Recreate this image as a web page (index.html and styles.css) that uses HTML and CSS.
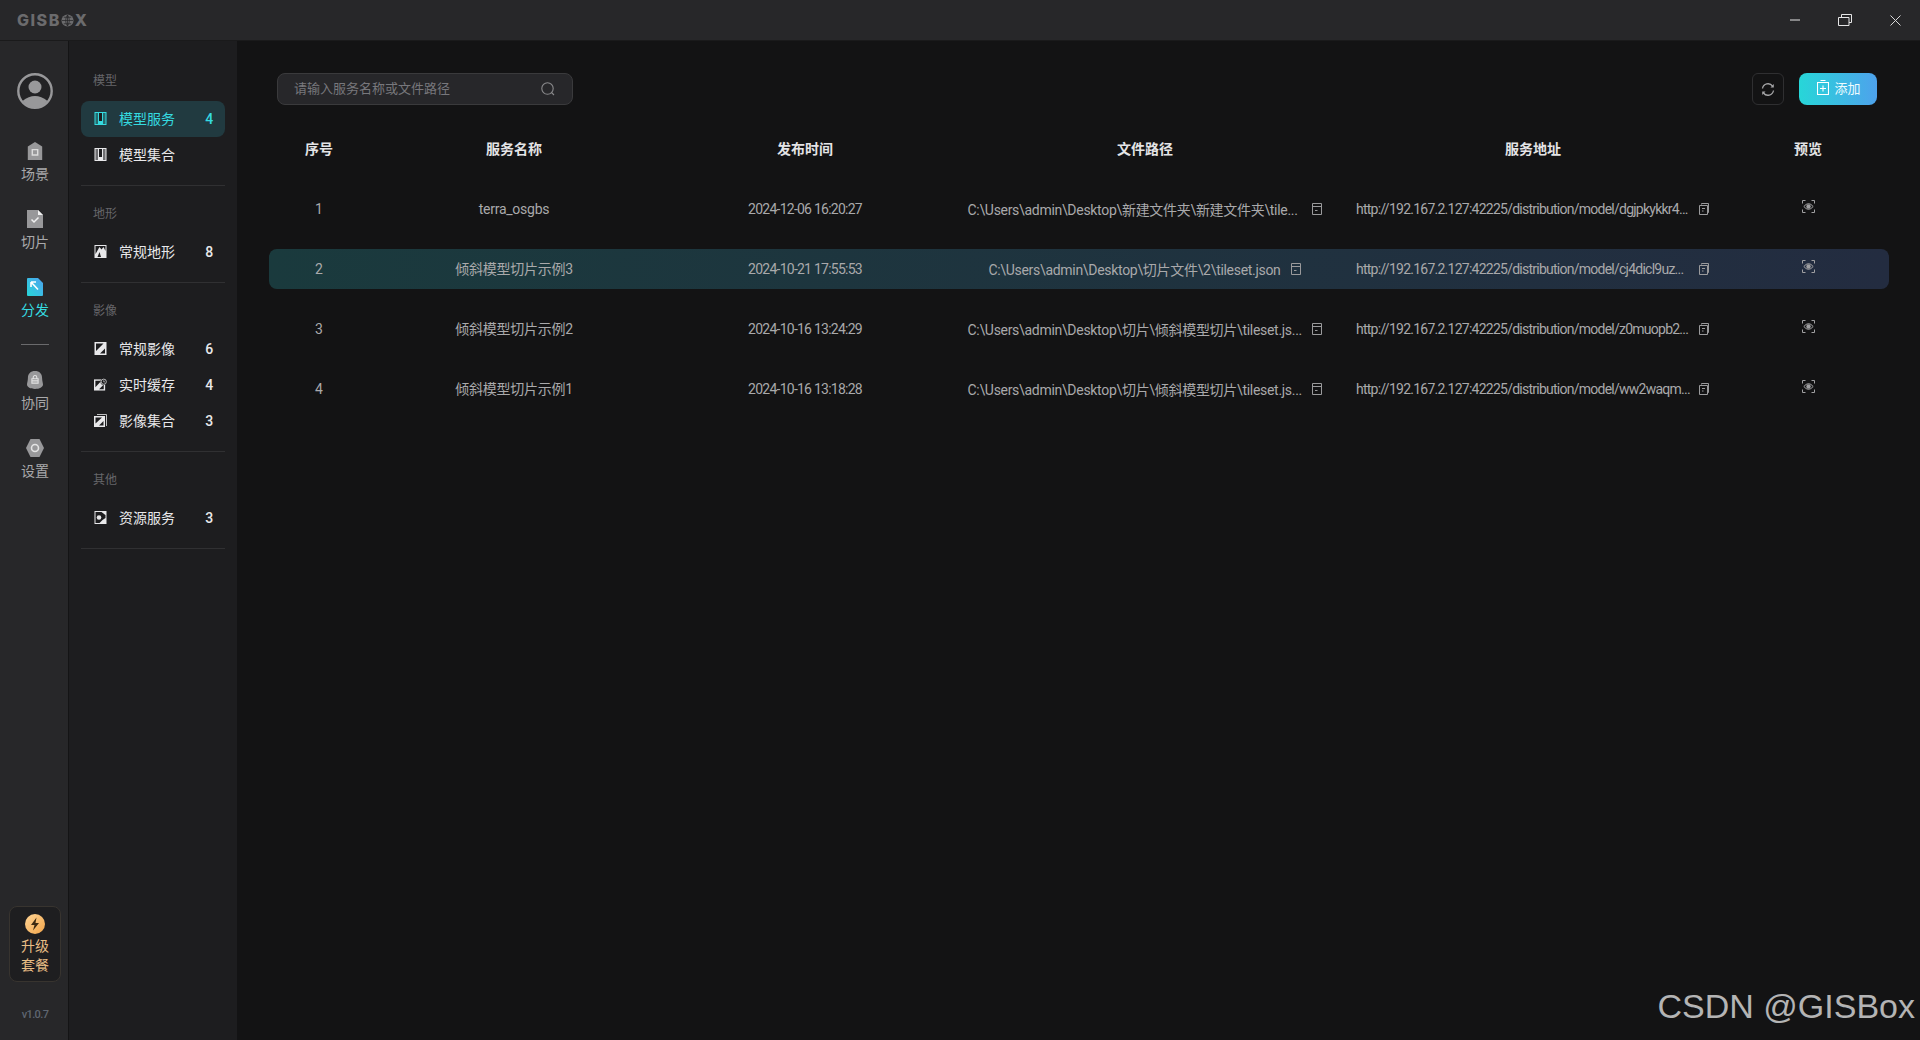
FILE: index.html
```html
<!DOCTYPE html>
<html lang="zh-CN">
<head>
<meta charset="utf-8">
<title>GISBox</title>
<link rel="stylesheet" href="styles.css">
</head>
<body>
<svg class="defs" width="0" height="0" aria-hidden="true">
  <symbol id="doc" viewBox="0 0 12 12"><path d="M1.500 .5h9v11h-9zM1.500 3.500h9M4 7.500h2.500" fill="none" stroke="currentColor"/></symbol>
  <symbol id="copy" viewBox="0 0 12 12"><path d="M3.500 1.500V.5h7v9h-1M1.500 2.500h8v9h-8zM4 5.500h3M4 8h1.500" fill="none" stroke="currentColor"/></symbol>
  <symbol id="view" viewBox="0 0 13 13"><path d="M.5 3.500V.5h3M9.500 .5h3v3M12.500 9.500v3h-3M3.500 12.500h-3v-3M1.800 6.500Q6.500 .8 11.200 6.500Q6.500 12.200 1.800 6.500Z" fill="none" stroke="currentColor"/><circle cx="6.500" cy="6.500" r="2.200" fill="currentColor"/></symbol>
  <symbol id="m-model" viewBox="0 0 12 13"><path d="M0 0h12v13H0z" fill="currentColor"/><path d="M1 1h2.500v11H1zM8.500 1H11v11H8.500z" fill="#1d1d1f" opacity=".6"/><path d="M4.500 1h3v8h-3z" fill="#1d1d1f"/></symbol>
  <symbol id="m-terrain" viewBox="0 0 12 13"><path d="M0 0h12v13H0z" fill="currentColor"/><path d="M1 12V1h10v5L9 2 7 4.500 5 2 1 9z" fill="#1d1d1f"/><path d="M3 12l2-5 1.500 5z" fill="#1d1d1f"/></symbol>
  <symbol id="m-image" viewBox="0 0 12 13"><path d="M0 0h12v13H0z" fill="currentColor"/><path d="M1.500 1.500H9L1.500 9zM10.500 11.500h-5l5-5z" fill="#1d1d1f"/></symbol>
  <symbol id="m-cache" viewBox="0 0 14 13"><path d="M0 1h12v12H0z" fill="currentColor"/><path d="M1.500 2.500H8L1.500 9.500zM10.500 11.500h-5l5-5z" fill="#1d1d1f"/><circle cx="10.500" cy="3.500" r="3.500" fill="#1d1d1f"/><circle cx="10.500" cy="3.500" r="2.800" fill="none" stroke="currentColor" stroke-width=".8"/><path d="M10.500 2v1.700h1.300" fill="none" stroke="currentColor" stroke-width=".7"/></symbol>
  <symbol id="m-stack" viewBox="0 0 13 13"><path d="M3 .5h9.500V12" fill="none" stroke="currentColor" stroke-width=".8"/><path d="M0 2h11v11H0z" fill="currentColor"/><path d="M1.500 3.500H8L1.500 9.500zM9.500 11.500H5l4.500-4.500z" fill="#1d1d1f"/></symbol>
  <symbol id="m-res" viewBox="0 0 12 13"><path d="M0 0h12v13H0z" fill="currentColor"/><path d="M1 1h7l3 3v3L8 9 5 12H1z" fill="#1d1d1f"/><circle cx="4.500" cy="6.500" r="2.300" fill="currentColor"/><path d="M7 1h4v3z" fill="currentColor"/></symbol>
</svg>

<div class="app">
  <header class="titlebar">
    <div class="logo">GISB<svg class="globe" viewBox="0 0 14 14"><circle cx="7" cy="7" r="6.500" fill="#6b6b6d"/><path d="M1 7h12M7 1v12M3 3.500h8M3 10.500h8M7 1Q3 7 7 13Q11 7 7 1" fill="none" stroke="#262628" stroke-width=".8"/></svg>X</div>
    <div class="winctl">
      <svg class="w-min" viewBox="0 0 10 2"><path d="M0 1h10" stroke="#e6e6e6"/></svg>
      <svg class="w-max" viewBox="0 0 14 12"><path d="M3.500 3V.5h10v8H11M.5 3.500h10.500v8H.5z" fill="none" stroke="#e6e6e6"/></svg>
      <svg class="w-close" viewBox="0 0 11 11"><path d="M.5.500l10 10M10.500.5l-10 10" stroke="#d8d8d8"/></svg>
    </div>
  </header>

  <div class="body">
    <nav class="rail">
      <svg class="avatar" viewBox="0 0 36 36"><circle cx="18" cy="18" r="16.700" fill="#232325" stroke="#98989a" stroke-width="2.400"/><circle cx="18" cy="14" r="6.500" fill="#98989a"/><path d="M5.500 28Q18 18 30.500 28Q25 34.800 18 34.800T5.500 28Z" fill="#98989a"/></svg>
      <a class="rail-item"><svg class="rail-ic" viewBox="0 0 16 20"><path d="M8 0l8 5v15H0V5z" fill="#98989a"/><path d="M5 8.500h6v6H5z" fill="none" stroke="#dcdcdc" stroke-width="1.600"/></svg><span>场景</span></a>
      <a class="rail-item"><svg class="rail-ic" viewBox="0 0 16 18"><path d="M0 0h11l5 5v13H0z" fill="#98989a"/><path d="M11 0l5 5h-5z" fill="#f0f0f0"/><path d="M4.500 9.500l2.500 2.500 4.500-4.500" fill="none" stroke="#f0f0f0" stroke-width="1.500"/></svg><span>切片</span></a>
      <a class="rail-item rail-on"><svg class="rail-ic" viewBox="0 0 16 18"><defs><linearGradient id="grad-send" x1="0" y1="1" x2="1" y2="0"><stop offset="0" stop-color="#27d6d8"/><stop offset="1" stop-color="#4da2ee"/></linearGradient></defs><path d="M1 0h10l5 5v12a1 1 0 0 1-1 1H1a1 1 0 0 1-1-1V1a1 1 0 0 1 1-1z" fill="url(#grad-send)"/><path d="M4 4h5M4 4v5M4 4l7 7.500" fill="none" stroke="#fff" stroke-width="1.600"/></svg><span>分发</span></a>
      <div class="rail-sep"></div>
      <a class="rail-item"><svg class="rail-ic" viewBox="0 0 18 20"><path d="M9 0C14 0 17 3 17 8c0 3 1 5 1 7 0 3-4 5-9 5s-9-2-9-5c0-2 1-4 1-7C1 3 4 0 9 0z" fill="#98989a"/><path d="M5.500 8.500h7v5h-7zM7 8.500V7a2 2 0 0 1 4 0v1.500M5.500 11h7" fill="none" stroke="#e4e4e4" stroke-width="1.200"/></svg><span>协同</span></a>
      <a class="rail-item"><svg class="rail-ic rail-hex" viewBox="0 0 18 18"><path d="M4.500 0h9L18 9l-4.500 9h-9L0 9z" fill="#98989a"/><circle cx="9" cy="9" r="3.500" fill="none" stroke="#e4e4e4" stroke-width="1.600"/></svg><span>设置</span></a>
      <div class="rail-fill"></div>
      <a class="upgrade">
        <svg class="bolt" viewBox="0 0 20 20"><defs><linearGradient id="grad-bolt" x1="0" y1="0" x2="1" y2="1"><stop offset="0" stop-color="#ffd596"/><stop offset="1" stop-color="#f2a54a"/></linearGradient></defs><circle cx="10" cy="10" r="10" fill="url(#grad-bolt)"/><path d="M11.500 3.500L6 11h3.500L8 16.500 14 9h-3.500z" fill="#3d2a12"/></svg>
        <span>升级<br>套餐</span>
      </a>
      <div class="version">v1.0.7</div>
    </nav>

    <aside class="panel">
      <section class="group">
        <h4>模型</h4>
        <a class="item item-on"><svg class="m-ic"><use href="#m-model"/></svg><span class="name">模型服务</span><b>4</b></a>
        <a class="item"><svg class="m-ic"><use href="#m-model"/></svg><span class="name">模型集合</span></a>
      </section>
      <section class="group">
        <h4>地形</h4>
        <a class="item"><svg class="m-ic"><use href="#m-terrain"/></svg><span class="name">常规地形</span><b>8</b></a>
      </section>
      <section class="group">
        <h4>影像</h4>
        <a class="item"><svg class="m-ic"><use href="#m-image"/></svg><span class="name">常规影像</span><b>6</b></a>
        <a class="item"><svg class="m-ic"><use href="#m-cache"/></svg><span class="name">实时缓存</span><b>4</b></a>
        <a class="item"><svg class="m-ic"><use href="#m-stack"/></svg><span class="name">影像集合</span><b>3</b></a>
      </section>
      <section class="group">
        <h4>其他</h4>
        <a class="item"><svg class="m-ic"><use href="#m-res"/></svg><span class="name">资源服务</span><b>3</b></a>
      </section>
    </aside>

    <main class="main">
      <div class="toolbar">
        <div class="search">
          <span>请输入服务名称或文件路径</span>
          <svg viewBox="0 0 14 14"><circle cx="6.500" cy="6.500" r="5.700" fill="none" stroke="#8a8a8c" stroke-width="1.100"/><path d="M10.500 10.500l2.500 2.500" stroke="#8a8a8c" stroke-width="1.100"/></svg>
        </div>
        <div class="actions">
          <button class="refresh"><svg viewBox="0 0 14 14"><path d="M1.500 6A5.600 5.600 0 0 1 11.500 3.500M12.500 8A5.600 5.600 0 0 1 2.500 10.500" fill="none" stroke="#a6a6a8" stroke-width="1.300"/><path d="M12.800 1.500V5H9.500zM1.200 12.500V9h3.300z" fill="#a6a6a8"/></svg></button>
          <button class="add"><svg viewBox="0 0 12 15"><path d="M3.500.5h5M.5 2.500h11v12H.5zM6 5.500v6M3 8.500h6" fill="none" stroke="#fff" stroke-width="1.100"/></svg>添加</button>
        </div>
      </div>

      <div class="grid thead">
        <div>序号</div><div>服务名称</div><div>发布时间</div><div>文件路径</div><div>服务地址</div><div>预览</div>
      </div>

      <div class="grid row">
        <div>1</div><div class="svc">terra_osgbs</div><div class="time">2024-12-06 16:20:27</div>
        <div class="cell-ic cell-path"><span class="clip">C:\Users\admin\Desktop\新建文件夹\新建文件夹\tile...</span><svg class="ic"><use href="#doc"/></svg></div>
        <div class="cell-ic cell-url"><span>http://192.167.2.127:42225/distribution/model/dgjpkykkr4...</span><svg class="ic"><use href="#copy"/></svg></div>
        <div class="cell-view"><svg class="ic-view"><use href="#view"/></svg></div>
      </div>
      <div class="grid row row-on">
        <div>2</div><div class="svc svc-cn">倾斜模型切片示例3</div><div class="time">2024-10-21 17:55:53</div>
        <div class="cell-ic cell-path"><span>C:\Users\admin\Desktop\切片文件\2\tileset.json</span><svg class="ic"><use href="#doc"/></svg></div>
        <div class="cell-ic cell-url"><span>http://192.167.2.127:42225/distribution/model/cj4dicl9uz...</span><svg class="ic"><use href="#copy"/></svg></div>
        <div class="cell-view"><svg class="ic-view"><use href="#view"/></svg></div>
      </div>
      <div class="grid row">
        <div>3</div><div class="svc svc-cn">倾斜模型切片示例2</div><div class="time">2024-10-16 13:24:29</div>
        <div class="cell-ic cell-path"><span class="clip">C:\Users\admin\Desktop\切片\倾斜模型切片\tileset.js...</span><svg class="ic"><use href="#doc"/></svg></div>
        <div class="cell-ic cell-url"><span>http://192.167.2.127:42225/distribution/model/z0muopb2...</span><svg class="ic"><use href="#copy"/></svg></div>
        <div class="cell-view"><svg class="ic-view"><use href="#view"/></svg></div>
      </div>
      <div class="grid row">
        <div>4</div><div class="svc svc-cn">倾斜模型切片示例1</div><div class="time">2024-10-16 13:18:28</div>
        <div class="cell-ic cell-path"><span class="clip">C:\Users\admin\Desktop\切片\倾斜模型切片\tileset.js...</span><svg class="ic"><use href="#doc"/></svg></div>
        <div class="cell-ic cell-url"><span>http://192.167.2.127:42225/distribution/model/ww2waqm...</span><svg class="ic"><use href="#copy"/></svg></div>
        <div class="cell-view"><svg class="ic-view"><use href="#view"/></svg></div>
      </div>
      <div class="watermark">CSDN @GISBox</div>
    </main>
  </div>
</div>
</body>
</html>
```
FILE: styles.css
```css
* { box-sizing: border-box; }
html, body { margin: 0; height: 100%; background: #131314; overflow: hidden; }
body { font-family: Roboto, "Noto Sans CJK SC", sans-serif; font-size: 14px; color: #a9a9ab; }
.defs { position: absolute; }
a { display: flex; text-decoration: none; color: inherit; }
h4 { margin: 0; font-weight: 400; }
button { font-family: inherit; border: 0; padding: 0; cursor: pointer; }

.app { display: flex; flex-direction: column; height: 100vh; }

.titlebar { flex: none; height: 41px; display: flex; align-items: center; justify-content: space-between; background: #272729; border-bottom: 1px solid #1a1a1b; padding-left: 17px; }
.logo { display: flex; align-items: center; font-family: Inter, sans-serif; font-weight: 800; font-size: 16px; letter-spacing: 1.5px; color: #6b6b6d; line-height: 14px; }
.globe { width: 13px; height: 13px; margin: 0 1px 0 0; }
.winctl { display: flex; align-items: center; }
.w-min { width: 10px; height: 2px; margin-right: 38px; }
.w-max { width: 14px; height: 12px; margin-right: 38px; }
.w-close { width: 11px; height: 11px; margin-right: 19px; }

.body { flex: 1; display: flex; min-height: 0; }

.rail { flex: none; width: 69px; display: flex; flex-direction: column; align-items: center; background: #272729; border-right: 1px solid #141415; padding: 32px 0 0 2px; }
.avatar { width: 36px; height: 36px; margin-bottom: 24px; flex: none; }
.rail-item { flex: none; flex-direction: column; align-items: center; width: 100%; height: 68px; padding-top: 9px; color: #a9a9ab; line-height: 20px; }
.rail-ic { width: 16px; height: 18px; margin-bottom: 4px; flex: none; }
.rail-on { color: #35dbe0; }
.rail-sep { flex: none; width: 28px; height: 1px; background: #6a6a6c; margin: 7px 0 17px; }
.rail-hex { width: 18px; }
.rail-fill { flex: 1; }
.upgrade { flex: none; flex-direction: column; align-items: center; width: 52px; height: 76px; border: 1px solid #38342f; border-radius: 8px; background: #1e1e20; padding-top: 7px; color: #e8bd85; line-height: 19px; text-align: center; }
.bolt { width: 20px; height: 20px; flex: none; margin-bottom: 3px; }
.version { flex: none; height: 58px; padding-top: 24px; font-size: 11px; letter-spacing: -.6px; font-weight: 500; color: #5f6671; line-height: 18px; }

.panel { flex: none; width: 168px; background: #1d1d1f; padding: 29px 12px 0; }
.group { border-bottom: 1px solid #303032; padding-bottom: 12px; margin-bottom: 17px; }
.group h4 { font-size: 12px; height: 20px; line-height: 20px; padding-top: 1px; color: #66666a; padding-left: 12px; margin-bottom: 11px; }
.item { height: 36px; align-items: center; padding: 0 12px 2px 13px; border-radius: 8px; color: #e8e8ea; }
.m-ic { width: 13px; height: 13px; flex: none; margin-right: 12px; color: #e8e8ea; }
.name { flex: 1; }
.item b { font-weight: 500; font-size: 14px; letter-spacing: -.3px; padding-top: 2px; }
.item-on { background: #213a40; color: #35dbe0; }
.item-on .m-ic { color: #35dbe0; }

.main { flex: 1; min-width: 0; position: relative; background: #131314; padding: 32px 31px 0 32px; }
.toolbar { display: flex; justify-content: space-between; padding: 0 12px 0 8px; margin-bottom: 24px; }
.search { width: 296px; height: 32px; display: flex; align-items: center; justify-content: space-between; padding: 0 17px 0 16px; background: #27272a; border: 1px solid #3a3a3c; border-radius: 8px; font-size: 13px; color: #77777c; }
.search span { padding-bottom: 4px; }
.search svg { width: 14px; height: 14px; }
.actions { display: flex; gap: 15px; }
.refresh { width: 32px; height: 32px; display: flex; align-items: center; justify-content: center; background: transparent; border: 1px solid #2f2f31; border-radius: 6px; }
.refresh svg { width: 14px; height: 15px; }
.add { width: 78px; height: 32px; display: flex; align-items: center; justify-content: center; gap: 5px; padding: 0 0 3px 2px; color: #eefcff; font-size: 13px; border-radius: 8px; background: linear-gradient(90deg, #27d6d8, #4ea2ec); }
.add svg { width: 12px; height: 15px; }

.grid { display: grid; grid-template-columns: 100px 290px 292px 388px 388px 162px; align-items: center; text-align: center; height: 40px; }
.thead { font-weight: 700; color: #e4e4e6; margin-bottom: 20px; padding-bottom: 2px; }
.row { margin-bottom: 20px; border-radius: 8px; }
.row-on { background: linear-gradient(90deg, #1a3a3d, #232c40); }
.svc { letter-spacing: -.25px; }
.svc-cn { padding-bottom: 2px; }
.time { letter-spacing: -.75px; }
.cell-ic { display: flex; align-items: center; justify-content: center; gap: 9px; color: #a9a9ab; white-space: nowrap; }
.cell-path { letter-spacing: -.3px; }
.clip { width: 334px; text-align: left; }
.cell-url { letter-spacing: -.75px; }
.cell-url span { width: 333px; text-align: left; }
.ic { width: 12px; height: 12px; flex: none; color: #9a9a9c; }
.cell-view { display: flex; justify-content: center; }
.ic-view { width: 13px; height: 13px; margin-top: -5px; color: #a0a0a2; }

.watermark { position: absolute; right: 5px; bottom: 15px; font-family: "Liberation Sans", sans-serif; font-size: 34px; line-height: 37px; color: #b4b4b4; }
```
